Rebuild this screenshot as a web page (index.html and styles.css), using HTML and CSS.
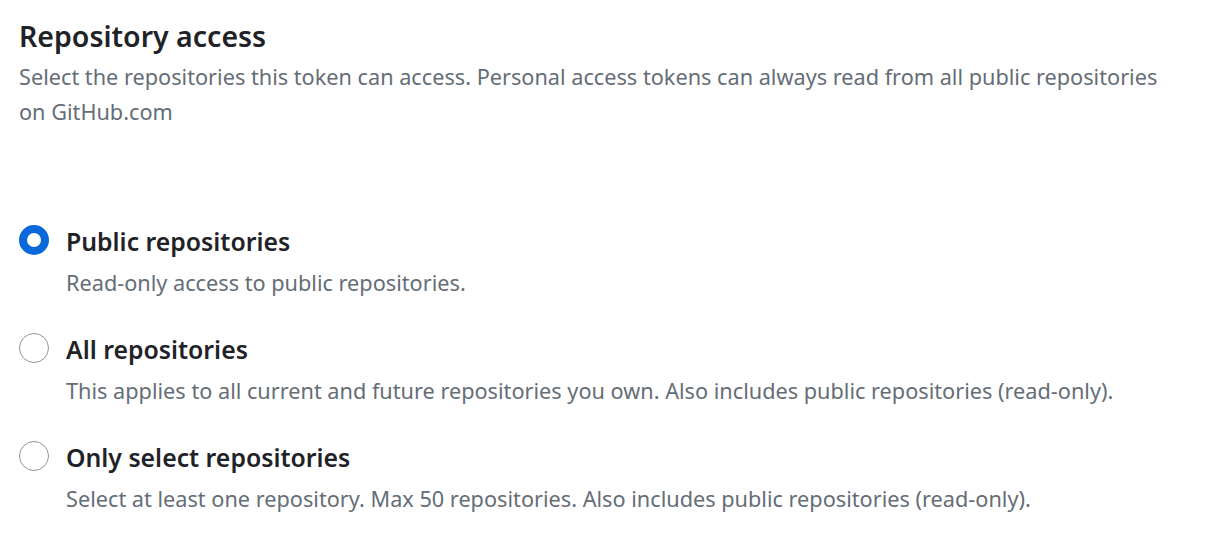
FILE: index.html
```html
<!DOCTYPE html>
<html lang="en">
<head>
<meta charset="utf-8">
<title>Repository access</title>
<link rel="stylesheet" href="styles.css">
</head>
<body>
<section class="access">
  <h2 class="access-title">Repository access</h2>
  <p class="access-desc">Select the repositories this token can access. Personal access tokens can always read from all public repositories on GitHub.com</p>

  <div class="options">
    <label class="option">
      <span class="radio checked"></span>
      <span class="option-text">
        <span class="option-title">Public repositories</span>
        <span class="option-desc">Read-only access to public repositories.</span>
      </span>
    </label>
    <label class="option">
      <span class="radio"></span>
      <span class="option-text">
        <span class="option-title">All repositories</span>
        <span class="option-desc">This applies to all current and future repositories you own. Also includes public repositories (read-only).</span>
      </span>
    </label>
    <label class="option">
      <span class="radio"></span>
      <span class="option-text">
        <span class="option-title">Only select repositories</span>
        <span class="option-desc">Select at least one repository. Max 50 repositories. Also includes public repositories (read-only).</span>
      </span>
    </label>
  </div>
</section>
</body>
</html>
```

FILE: styles.css
```css
* { box-sizing: border-box; }

html, body {
  margin: 0;
  background: #ffffff;
}

body {
  font-family: "Noto Sans", "Open Sans", "Liberation Sans", sans-serif;
  color: #1f2328;
}

.access {
  padding: 18px 40px 0 19px;
  width: 1212px;
}

.access-title {
  margin: 0;
  font-size: 28.5px;
  line-height: 36px;
  font-weight: 600;
  color: #1f2328;
}

.access-desc {
  margin: 4.5px 0 0;
  font-size: 21.7px;
  line-height: 35px;
  color: #656d76;
  max-width: 1150px;
}

.options {
  margin-top: 94.5px;
  display: flex;
  flex-direction: column;
  gap: 31.5px;
}

.option {
  display: flex;
  gap: 17px;
  align-items: flex-start;
}

.radio {
  flex: none;
  width: 30px;
  height: 30px;
  margin-top: 2px;
  border-radius: 50%;
  border: 1px solid #8c959f;
  background: #ffffff;
}

.radio.checked {
  border: 8px solid #0969da;
}

.option-text {
  display: flex;
  flex-direction: column;
  gap: 5.5px;
}

.option-title {
  font-size: 24.8px;
  line-height: 36px;
  font-weight: 600;
  color: #1f2328;
}

.option-desc {
  font-size: 21.7px;
  line-height: 35px;
  color: #656d76;
}
```
